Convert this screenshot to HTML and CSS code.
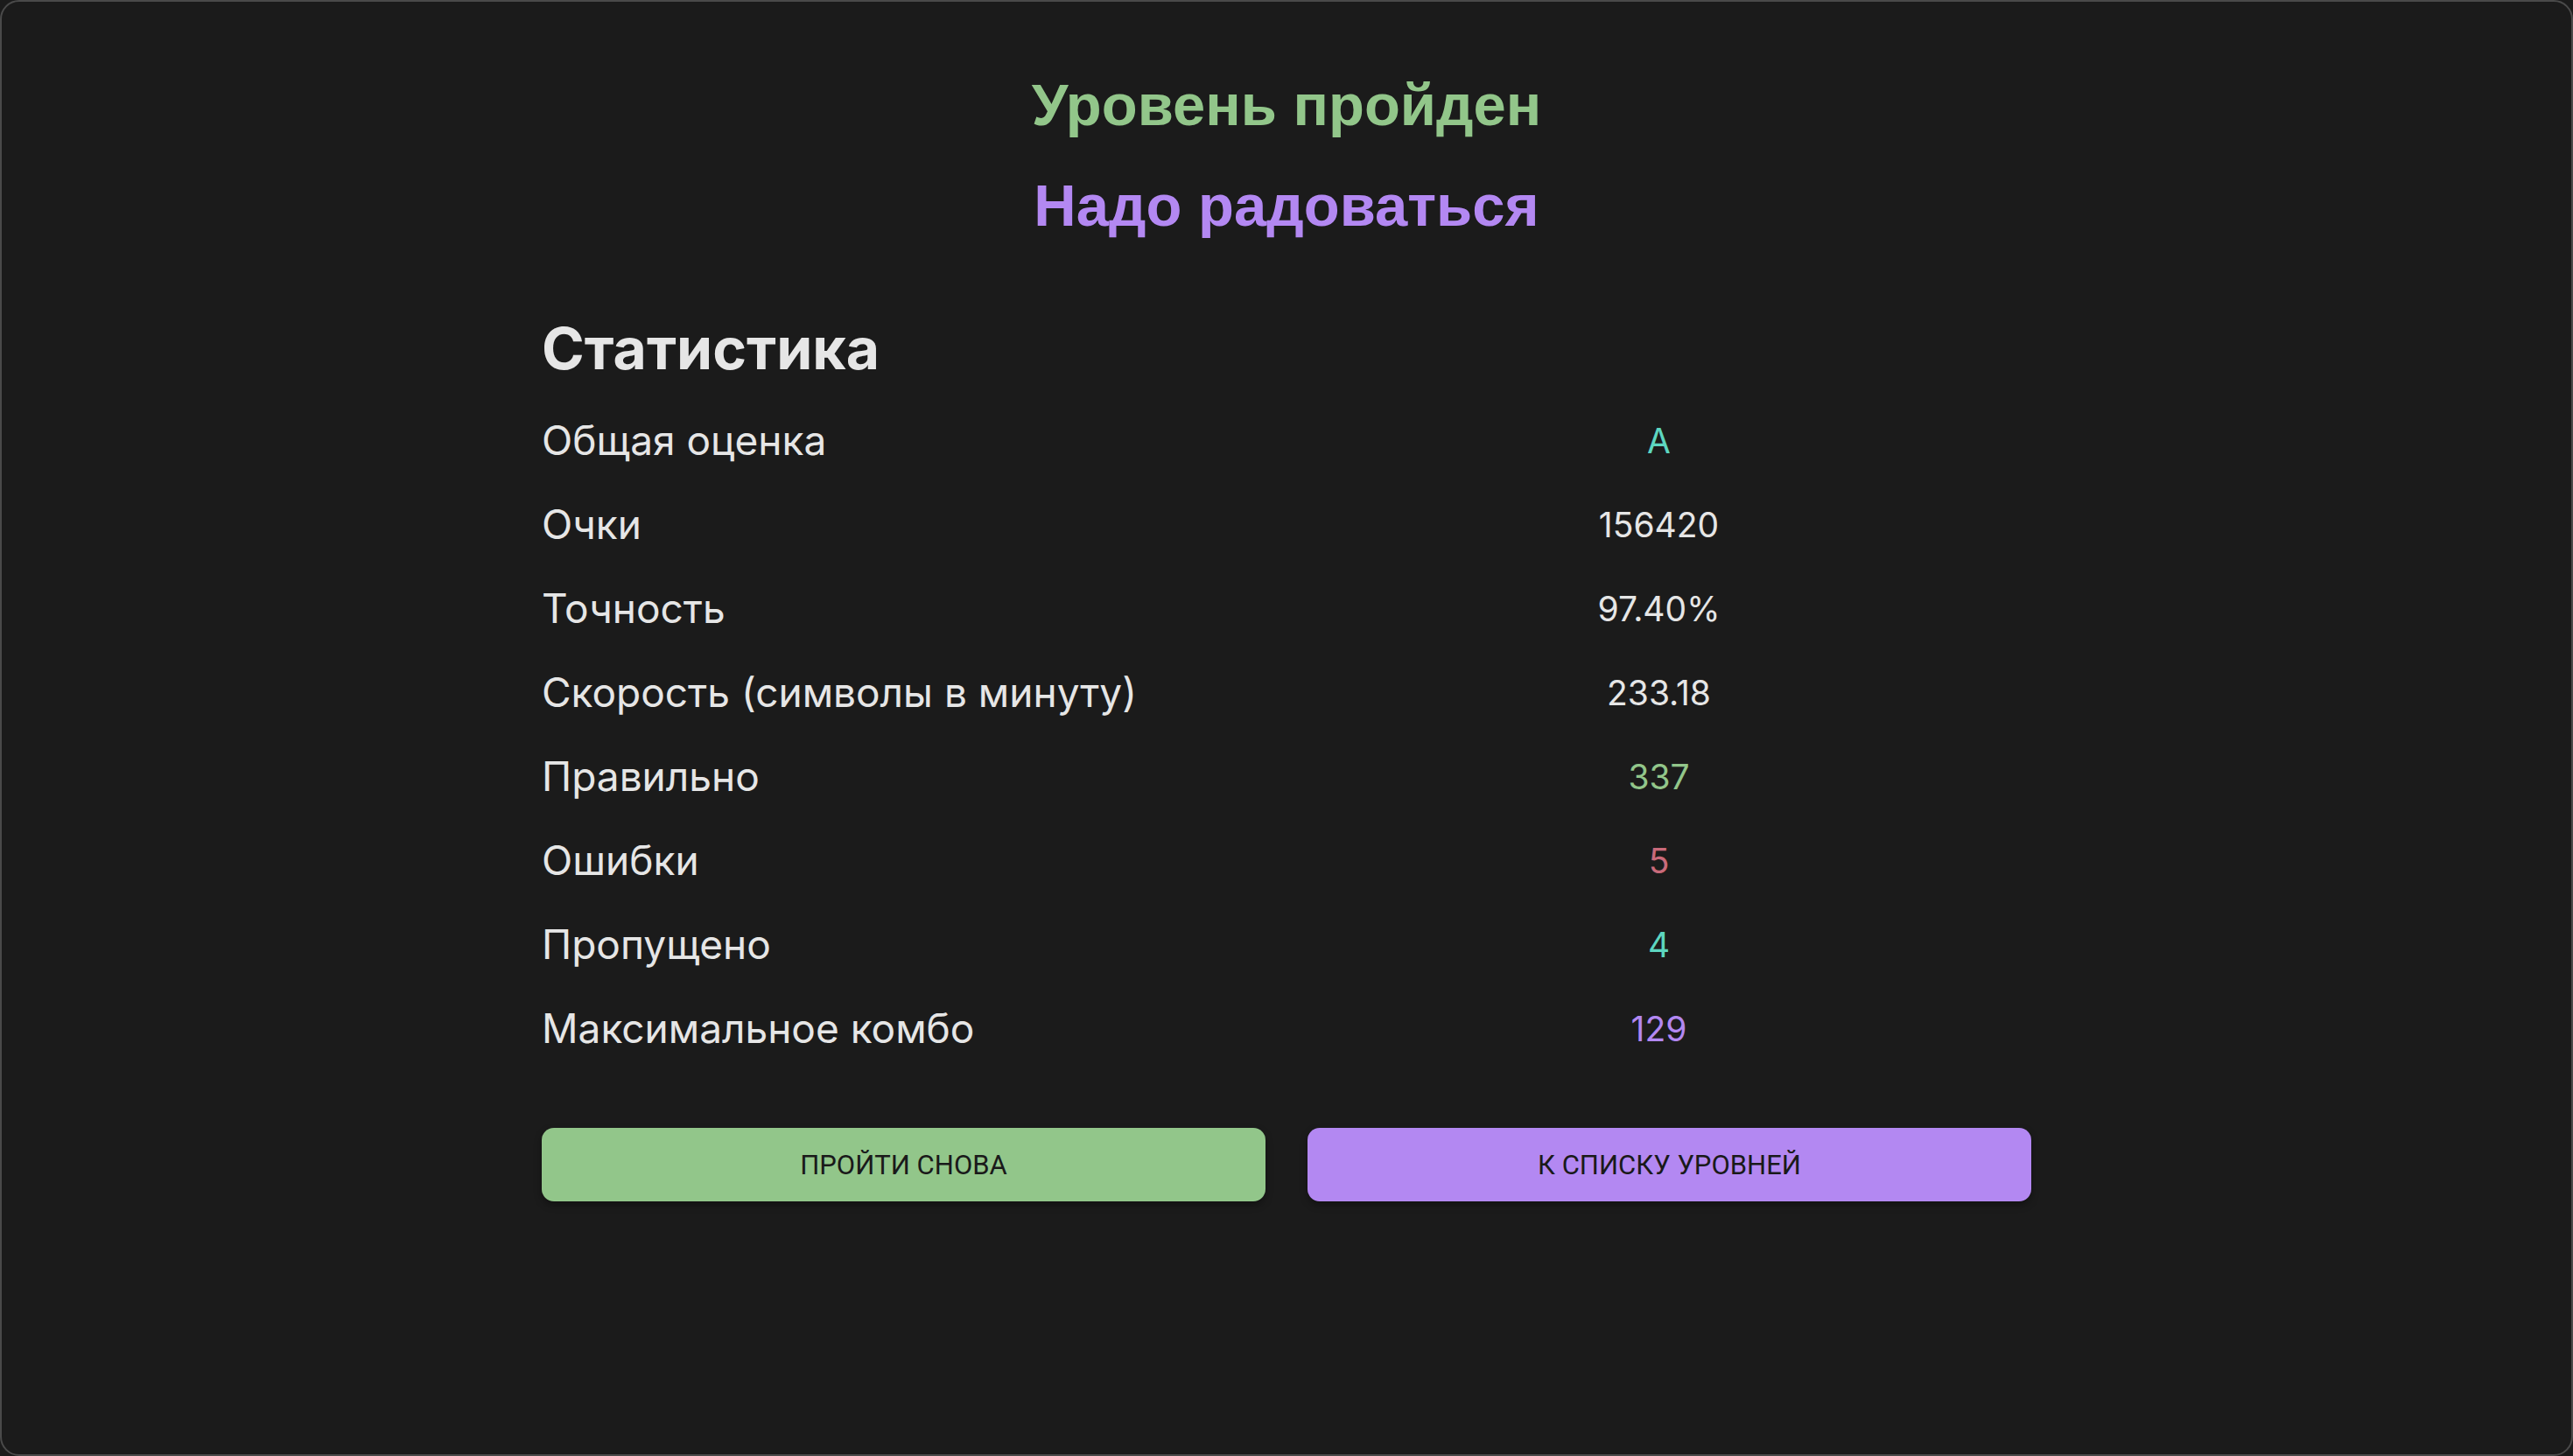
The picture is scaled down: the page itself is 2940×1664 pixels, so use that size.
FILE: index.html
```html
<!DOCTYPE html>
<html lang="ru">
<head>
<meta charset="utf-8">
<title>Уровень пройден</title>
<link rel="stylesheet" href="styles.css">
</head>
<body>
<div class="window">
  <main class="result">
    <h1 class="title title-green">Уровень пройден</h1>
    <h2 class="title title-purple">Надо радоваться</h2>
    <section class="stats">
      <h3 class="stats-heading">Статистика</h3>
      <div class="stats-grid">
        <div class="row"><span class="label">Общая оценка</span><span class="value teal">A</span></div>
        <div class="row"><span class="label">Очки</span><span class="value">156420</span></div>
        <div class="row"><span class="label">Точность</span><span class="value">97.40%</span></div>
        <div class="row"><span class="label">Скорость (символы в минуту)</span><span class="value">233.18</span></div>
        <div class="row"><span class="label">Правильно</span><span class="value green">337</span></div>
        <div class="row"><span class="label">Ошибки</span><span class="value red">5</span></div>
        <div class="row"><span class="label">Пропущено</span><span class="value teal">4</span></div>
        <div class="row"><span class="label">Максимальное комбо</span><span class="value purple">129</span></div>
      </div>
    </section>
    <div class="actions">
      <button class="btn btn-green">ПРОЙТИ СНОВА</button>
      <button class="btn btn-purple">К СПИСКУ УРОВНЕЙ</button>
    </div>
  </main>
</div>
</body>
</html>
```

FILE: styles.css
```css
html, body {
  margin: 0;
  padding: 0;
  background: #1b1b1b;
}

.window {
  box-sizing: border-box;
  width: 2940px;
  height: 1664px;
  background: #1b1b1b;
  border: 2px solid #4a4a4a;
  border-radius: 22px;
  overflow: hidden;
}

.result {
  width: 1702px;
  margin: 0 auto;
  padding-top: 78px;
  display: flex;
  flex-direction: column;
}

.title {
  margin: 0;
  font-family: "Liberation Sans", Arial, sans-serif;
  font-weight: 700;
  font-size: 67px;
  line-height: 79px;
  text-align: center;
}

.title-green { color: #92c68a; }
.title-purple { color: #b388f2; margin-top: 36px; }

.stats {
  margin-top: 87px;
}

.stats-heading {
  margin: 0;
  font-family: Inter, "Noto Sans", sans-serif;
  font-weight: 700;
  font-size: 66px;
  line-height: 74px;
  color: #e6e6e6;
}

.stats-grid {
  margin-top: 20px;
  display: flex;
  flex-direction: column;
}

.row {
  display: grid;
  grid-template-columns: 1fr 1fr;
  align-items: center;
  height: 96px;
}

.label {
  font-family: Inter, "Noto Sans", sans-serif;
  font-size: 46px;
  color: #e6e6e6;
}

.value {
  font-family: Inter, "Noto Sans", sans-serif;
  font-size: 39px;
  color: #e6e6e6;
  text-align: center;
}

.teal { color: #5dd6c0; }
.green { color: #92c68a; }
.red { color: #c96a7a; }
.purple { color: #b388f2; }

.actions {
  margin-top: 66px;
  display: grid;
  grid-template-columns: 1fr 1fr;
  gap: 48px;
}

.btn {
  height: 84px;
  border: none;
  border-radius: 14px;
  font-family: Roboto, "Liberation Sans", sans-serif;
  font-size: 31px;
  color: #1a1a1a;
  box-shadow: 0 4px 8px rgba(0, 0, 0, 0.35);
  cursor: pointer;
}

.btn-green { background: #92c68a; }
.btn-purple { background: #b388f2; }
```
